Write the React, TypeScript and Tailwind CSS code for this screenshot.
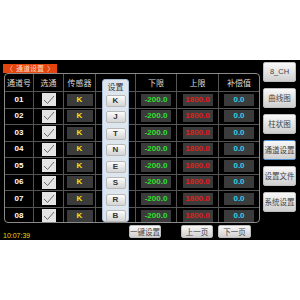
import React from 'react';

const rows = ['01', '02', '03', '04', '05', '06', '07', '08'];
const types = ['K', 'J', 'T', 'N', 'E', 'S', 'R', 'B'];
const sideButtons = ['8_CH', '曲线图', '柱状图', '通道设置', '设置文件', '系统设置'];

const cjk = { fontFamily: '"Noto Sans CJK SC", "Noto Sans", sans-serif' };
const num = { fontFamily: '"Liberation Sans", Arial, sans-serif' };

const Check = () => (
  <div className="w-[14px] h-[13px] bg-[#e4e4e4] flex items-center justify-center">
    <svg width="12" height="10" viewBox="0 0 12 10">
      <path d="M1 5 L4.5 8.5 L11 1" fill="none" stroke="#6a6a6a" strokeWidth="1" />
    </svg>
  </div>
);

const ValueBox = ({ text, color, w }: { text: string; color: string; w: string }) => (
  <div className={`${w} h-[12px] bg-[#3b3b3b] flex items-center justify-center text-[8px] font-bold ${color}`} style={num}>
    {text}
  </div>
);

const App = () => {
  const cell = 'border-r border-b border-[#555] flex items-center justify-center';
  return (
    <div className="w-[300px] h-[300px] bg-white flex flex-col">
      <div className="h-[60px]" />
      <div className="h-[180px] bg-black flex flex-col">
        <div className="flex">
          <div className="w-[262px] flex flex-col">
            <div className="h-[4px]" />
            <div className="ml-[3px] w-[54px] h-[9px] bg-[#e4450f] text-[#ffd9c0] text-[7px] leading-[9px] flex items-center justify-between px-[3px]" style={cjk}>
              <span>〈</span>
              <span>通道设置</span>
              <span>〉</span>
            </div>
            <div className="ml-[4px] relative w-[256px] h-[150px] border border-[#8a8a8a] rounded-[4px] overflow-hidden">
              <div className="grid grid-cols-[29px_30px_32px_40px_41px_42px_40px] grid-rows-[18px_repeat(8,16.5px)] text-white">
                {['通道号', '选通', '传感器', '', '下限', '上限', '补偿值'].map((h, i) => (
                  <div key={i} className={`${cell} ${i === 6 ? 'border-r-0' : ''} text-[8px] text-[#dcdcdc]`} style={cjk}>
                    {h}
                  </div>
                ))}
                {rows.map((r, ri) => {
                  const last = ri === 7 ? 'border-b-0' : '';
                  return (
                    <React.Fragment key={r}>
                      <div className={`${cell} ${last} text-[8px] font-bold`} style={num}>{r}</div>
                      <div className={`${cell} ${last}`}><Check /></div>
                      <div className={`${cell} ${last}`}>
                        <ValueBox text="K" color="text-[#f2e600]" w="w-[26px]" />
                      </div>
                      <div className={`${cell} ${last}`} />
                      <div className={`${cell} ${last}`}>
                        <ValueBox text="-200.0" color="text-[#2fe02f]" w="w-[30px]" />
                      </div>
                      <div className={`${cell} ${last}`}>
                        <ValueBox text="1800.0" color="text-[#e51b1b]" w="w-[30px]" />
                      </div>
                      <div className={`${cell} ${last} border-r-0`}>
                        <ValueBox text="0.0" color="text-[#27d4e6]" w="w-[30px]" />
                      </div>
                    </React.Fragment>
                  );
                })}
              </div>
              <div className="absolute left-[97px] top-[5px] w-[27px] h-[143px] bg-[#dde6ef] border border-[#a7bdd3] rounded-[3px] flex flex-col items-center">
                <div className="h-[13px] text-[8px] leading-[13px] text-[#333]" style={cjk}>设置</div>
                <div className="flex flex-col gap-[4.5px] mt-[1.5px]">
                  {types.map((t) => (
                    <div key={t} className="w-[20px] h-[12px] rounded-[2px] bg-gradient-to-b from-[#fbfbfb] to-[#d4d4d4] border border-[#b8b8b8] flex items-center justify-center text-[8px] font-bold text-[#333]" style={num}>
                      {t}
                    </div>
                  ))}
                </div>
              </div>
            </div>
          </div>
          <div className="flex flex-col gap-[6px] pt-[2px] ml-[1px]">
            {sideButtons.map((b) => (
              <div
                key={b}
                className={`w-[33px] h-[20px] rounded-[2px] flex items-center justify-center text-[7.5px] text-[#444] bg-gradient-to-b from-[#f8f8f8] to-[#cfcfcf] ${b === '通道设置' ? 'border border-[#4f8fd0]' : 'border border-[#bdbdbd]'}`}
                style={b === '8_CH' ? num : cjk}
              >
                {b}
              </div>
            ))}
          </div>
        </div>
        <div className="flex items-end h-[15px] mt-[2px]">
          <span className="w-[129px] pl-[3px] text-[7px] leading-[8px] text-[#e8d800]" style={num}>10:07:39</span>
          <div className="w-[32px] h-[13px] rounded-[2px] bg-gradient-to-b from-[#f8f8f8] to-[#cfcfcf] border border-[#bdbdbd] flex items-center justify-center text-[7.5px] text-[#444] mb-[2px]" style={cjk}>一键设置</div>
          <div className="ml-[20px] w-[32px] h-[13px] rounded-[2px] bg-gradient-to-b from-[#f8f8f8] to-[#cfcfcf] border border-[#bdbdbd] flex items-center justify-center text-[7.5px] text-[#444] mb-[2px]" style={cjk}>上一页</div>
          <div className="ml-[5px] w-[33px] h-[13px] rounded-[2px] bg-gradient-to-b from-[#f8f8f8] to-[#cfcfcf] border border-[#bdbdbd] flex items-center justify-center text-[7.5px] text-[#444] mb-[2px]" style={cjk}>下一页</div>
        </div>
      </div>
    </div>
  );
};

export default App;
